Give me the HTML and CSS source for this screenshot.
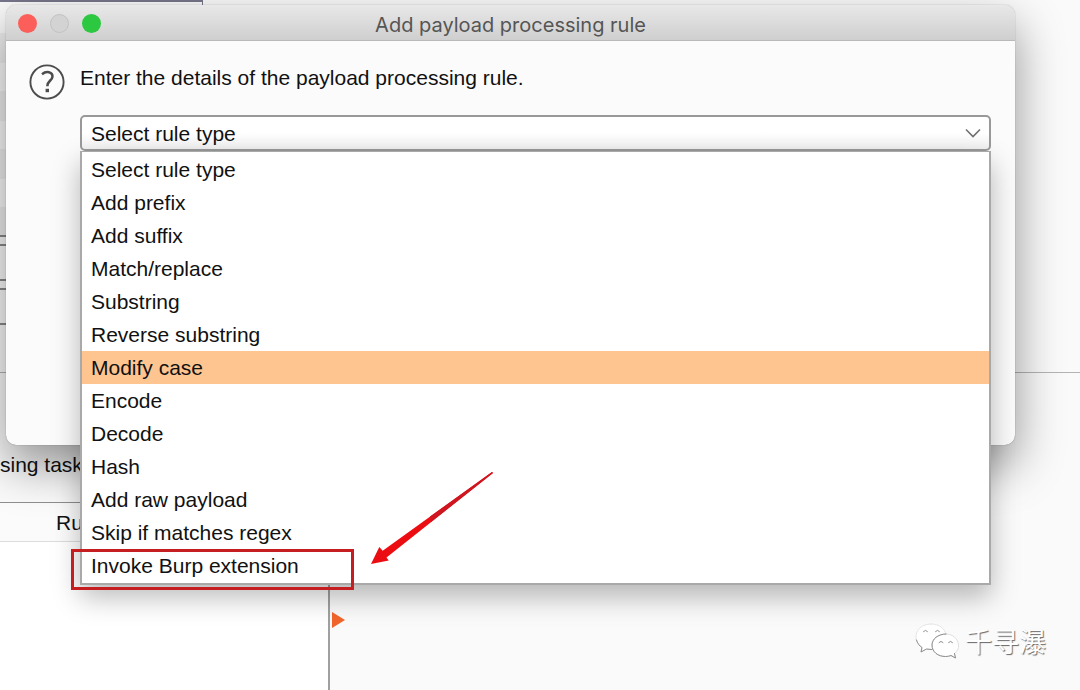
FILE: index.html
```html
<!DOCTYPE html>
<html lang="en">
<head>
    <meta charset="UTF-8">
    <meta name="viewport" content="width=device-width, initial-scale=1.0">
    <title>Add payload processing rule</title>
    <link rel="stylesheet" href="styles.css">
</head>
<body>
    <!-- Main window behind the dialog -->
    <main class="workspace">
        <section class="options">
            <div class="tab-edge"></div>
            <div class="options-list"></div>
            <div class="option-row"></div>
            <div class="option-gap"></div>
            <div class="option-row"></div>
            <div class="option-gap"></div>
            <div class="option-row"></div>
            <div class="option-last"></div>
        </section>
        <p class="hint">sing task</p>
        <section class="rules">
            <div class="rules-table">
                <div class="rules-header">Ru</div>
            </div>
            <div class="rules-side">
                <svg class="expander" width="13" height="16" viewBox="0 0 13 16">
                    <path d="M0 0 L13 8 L0 16 Z" fill="#f2662b"/>
                </svg>
            </div>
        </section>
    </main>

    <div class="dialog" role="dialog" aria-labelledby="dialog-title">
        <header class="title-bar">
            <div class="window-buttons">
                <button type="button" class="close" aria-label="Close"></button>
                <button type="button" class="minimize" aria-label="Minimize" disabled></button>
                <button type="button" class="zoom" aria-label="Zoom"></button>
            </div>
            <h1 id="dialog-title">Add payload processing rule</h1>
        </header>

        <div class="dialog-body">
            <button type="button" class="help" aria-label="Help">
                <svg width="36" height="36" viewBox="0 0 36 36" fill="none" stroke="#4c4c4c">
                    <circle cx="18" cy="18" r="16.6" stroke-width="1.9"/>
                    <path d="M13 10.2 C15.5 8.2 18 7.800 20 8.300 C22.700 9 23.700 11 23.400 13.200 C22.900 16.600 18.300 17 18.300 22.300" stroke-width="2.500"/>
                    <rect x="16.600" y="24.800" width="3.400" height="3.400" fill="#4c4c4c" stroke="none"/>
                </svg>
            </button>

            <div class="form">
                <label for="rule-type">Enter the details of the payload processing rule.</label>
                <div class="combo">
                    <select id="rule-type">
                        <option>Select rule type</option>
                    </select>
                    <svg class="chevron" width="16" height="10" viewBox="0 0 16 10" fill="none" stroke="#707070" stroke-width="1.6">
                        <path d="M1 1.5 L8 8.5 L15 1.5"/>
                    </svg>

                    <ul class="menu" role="listbox" aria-label="Rule type">
                        <li role="option">Select rule type</li>
                        <li role="option">Add prefix</li>
                        <li role="option">Add suffix</li>
                        <li role="option">Match/replace</li>
                        <li role="option">Substring</li>
                        <li role="option">Reverse substring</li>
                        <li role="option" class="active" aria-selected="true">Modify case</li>
                        <li role="option">Encode</li>
                        <li role="option">Decode</li>
                        <li role="option">Hash</li>
                        <li role="option">Add raw payload</li>
                        <li role="option">Skip if matches regex</li>
                        <li role="option" class="marked">
                            Invoke Burp extension
                            <span class="marker"></span>
                            <svg class="arrow" width="124" height="96" viewBox="0 0 124 96">
                                <path d="M1 94 L9.3 77 L12.7 80.7 L122 2 L123 3 L16.5 87.5 L18.7 90.5 Z" fill="#ec0d12"/>
                                <path d="M60 46.6 L122 2 L123 3 L61 52 Z" fill="#cf1620"/>
                            </svg>
                        </li>
                    </ul>
                </div>
            </div>
        </div>
    </div>

    <div class="watermark">
        <svg width="44" height="36" viewBox="0 0 44 36" fill="#fff" stroke-linecap="round">
            <path d="M16 1 C7 1 1 6.5 1 14 C1 18.5 3.5 22 7 24.5 L6 29 L11.5 26 C13 26.5 15 26.7 18 26.5 L31 12 C30 5 24 1 16 1 Z" stroke="#e6e6e6"/>
            <path d="M1.5 17 C2.5 20.5 4.5 23 7 24.5 L6 29 L11.5 26 L17 26.5" fill="none" stroke="#8e8e8e"/>
            <path d="M31 11 C23 11 17 16 17 22 C17 29 23 33.5 30.5 33.5 C33 33.5 34.5 33 36 32.5 L40.5 35 L39.5 30.5 C42 28.5 44 25.5 43.5 22 C43 16 38 11 31 11 Z" stroke="#e0e0e0"/>
            <path d="M31 11 C23 11 17 16 17 22 C17 29 23 33.5 30.5 33.5 C33 33.5 34.5 33 36 32.5 L40.5 35 L39.5 30.5" fill="none" stroke="#8e8e8e"/>
            <path d="M8.5 8.5 Q10.5 6 12.5 8.5 M20.5 8.5 Q22.5 6 24.5 8.5 M24 19.5 Q26 17 28 19.5 M33.5 19.5 Q35.5 17 37.5 19.5" fill="none" stroke="#8e8e8e"/>
        </svg>
        <span lang="zh-CN">千寻瀑</span>
    </div>
</body>
</html>
```
FILE: styles.css
```css
* {
    box-sizing: border-box;
}

body {
    margin: 0;
    font-family: "Liberation Sans", Arial, sans-serif;
    font-size: 21px;
    color: #111;
    background-color: #fafafa;
    overflow: hidden;
}

/* Main window */
.workspace {
    display: flex;
    flex-direction: column;
    min-height: 100vh;
}

.options {
    border-bottom: 1px solid #b4b4b4;
}

.tab-edge {
    width: 203px;
    height: 5px;
    border-top: 2px solid #77758a;
    border-right: 1px solid #77758a;
}

.options-list {
    height: 230px;
    background: repeating-linear-gradient(#fafafa 0, #fafafa 28px, #efefef 28px, #efefef 58px);
    width: 203px;
}

.option-row {
    height: 11px;
    border-top: 2px solid #8a8a8a;
    border-bottom: 2px solid #8a8a8a;
    width: 203px;
}

.option-row:nth-of-type(7) {
    height: 2px;
    border-bottom: none;
}

.option-gap {
    height: 33px;
}

.option-last {
    height: 47px;
}

.hint {
    margin: 0;
    padding-top: 78px;
    height: 129px;
    line-height: 28px;
}

.rules {
    display: flex;
    flex: 1;
}

.rules-table {
    width: 330px;
    background-color: #fff;
    border-top: 1px solid #8f8f8f;
    border-right: 2px solid #a0a0a0;
}

.rules-header {
    height: 39px;
    padding-left: 56px;
    line-height: 39px;
    background-color: #fbfbfb;
    border-bottom: 1px solid #dcdcdc;
}

.rules-side {
    flex: 1;
    padding: 110px 2px 0;
}

.expander {
    display: block;
}

/* Dialog */
.dialog {
    position: absolute;
    top: 5px;
    left: 6px;
    right: 65px;
    min-height: 440px;
    border-radius: 10px;
    background-color: #fbfbfb;
    box-shadow: 0 0 1px rgba(0, 0, 0, 0.5), 0 20px 48px rgba(0, 0, 0, 0.42);
}

.title-bar {
    position: relative;
    height: 36px;
    border-bottom: 1px solid #b9b9b9;
    border-radius: 10px 10px 0 0;
    background: linear-gradient(#e8e8e8, #cfcfcf);
}

.title-bar h1 {
    margin: 0;
    font-family: Inter, Roboto, sans-serif;
    font-size: 20px;
    font-weight: 400;
    line-height: 40px;
    text-align: center;
    color: #555;
}

.window-buttons {
    position: absolute;
    top: 9px;
    left: 12px;
    display: flex;
    gap: 13px;
}

.window-buttons button {
    width: 19px;
    height: 19px;
    padding: 0;
    border: none;
    border-radius: 50%;
}

.window-buttons .close {
    background-color: #fc5f5a;
}

.window-buttons .minimize {
    background-color: #d3d3d3;
    border: 1px solid #c2c2c2;
}

.window-buttons .zoom {
    background-color: #2bc840;
}

.dialog-body {
    display: flex;
    align-items: flex-start;
    gap: 15px;
    padding: 23px 24px 0 23px;
}

.help {
    padding: 0;
    border: none;
    background: none;
    line-height: 0;
}

.form {
    flex: 1;
}

.form label {
    display: block;
    line-height: 28px;
    margin-bottom: 23px;
}

.combo {
    position: relative;
}

.combo select {
    display: block;
    width: 100%;
    height: 36px;
    padding: 0 9px;
    appearance: none;
    border: 2px solid #999;
    border-radius: 5px;
    background: linear-gradient(#fff 50%, #f1f1f1);
    font: inherit;
    color: inherit;
}

.chevron {
    position: absolute;
    top: 13px;
    right: 10px;
}

.menu {
    position: absolute;
    top: 100%;
    left: 0;
    right: 0;
    margin: 0;
    padding: 1px 0;
    list-style: none;
    background-color: #fff;
    border: 2px solid #a9a9a9;
    border-top-width: 1px;
    box-shadow: 0 12px 26px rgba(0, 0, 0, 0.28);
}

.menu li {
    height: 33px;
    padding-left: 9px;
    line-height: 34px;
}

.menu .active {
    background-color: #ffc591;
}

.menu .marked {
    position: relative;
}

/* Red annotation on the last entry */
.marker {
    position: absolute;
    top: 0;
    left: -11px;
    width: 283px;
    height: 41px;
    border: 3px solid #c61d20;
}

.arrow {
    position: absolute;
    top: -79px;
    left: 288px;
}

/* Watermark */
.watermark {
    position: absolute;
    right: 34px;
    bottom: 31px;
    display: flex;
    align-items: center;
    gap: 6px;
    font-family: "Noto Sans CJK SC", sans-serif;
    font-size: 27px;
    line-height: 36px;
    color: #fff;
    text-shadow: 1px 1px 1px #666;
}
```
